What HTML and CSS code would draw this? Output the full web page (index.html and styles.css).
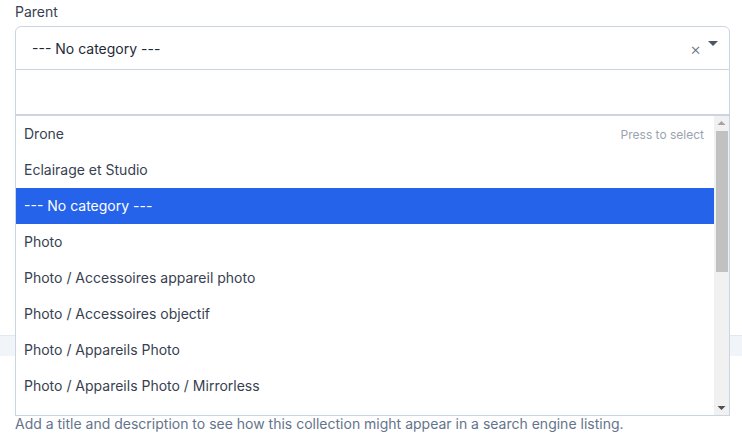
FILE: index.html
```html
<!DOCTYPE html>
<html>
<head>
<meta charset="utf-8">
<link rel="stylesheet" href="styles.css">
</head>
<body>
<div class="page">
  <div class="field">
    <label class="label">Parent</label>
    <div class="select">
      <span class="value">--- No category ---</span>
      <span class="clear">×</span>
      <span class="caret"></span>
    </div>
    <div class="dropdown">
      <div class="search"></div>
      <div class="list-wrap">
        <div class="options">
          <div class="opt"><span>Drone</span><span class="hint">Press to select</span></div>
          <div class="opt">Eclairage et Studio</div>
          <div class="opt active">--- No category ---</div>
          <div class="opt">Photo</div>
          <div class="opt">Photo / Accessoires appareil photo</div>
          <div class="opt">Photo / Accessoires objectif</div>
          <div class="opt">Photo / Appareils Photo</div>
          <div class="opt">Photo / Appareils Photo / Mirrorless</div>
        </div>
        <div class="scrollbar">
          <div class="sb-btn"><svg width="15" height="15" viewBox="0 0 15 15"><polygon points="3.5,9 11.5,9 7.5,5" fill="#a3a3a3"/></svg></div>
          <div class="sb-track"><div class="sb-thumb"></div></div>
          <div class="sb-btn"><svg width="15" height="15" viewBox="0 0 15 15"><polygon points="3.5,6 11.5,6 7.5,10" fill="#505050"/></svg></div>
        </div>
      </div>
    </div>
  </div>
  <div class="band"></div>
  <div class="seo">
    <p class="seo-desc">Add a title and description to see how this collection might appear in a search engine listing.</p>
  </div>
</div>
</body>
</html>
```
FILE: styles.css
```css
* { box-sizing: border-box; }
html, body { margin: 0; padding: 0; background: #fff; overflow: hidden; }
body { font-family: Inter, "Noto Sans", sans-serif; font-size: 14px; color: #374151; }
.page { padding: 2px 12px 0 15px; }
.field { position: relative; }
.label { display: block; line-height: 20px; margin-bottom: 4px; color: #374151; }
.select {
  height: 44px;
  border: 1px solid #cbd5e1;
  border-radius: 6px 6px 0 0;
  display: flex;
  align-items: center;
  padding: 0 0 0 16px;
  color: #1f2937;
}
.value { flex: 1; }
.clear { color: #6b7280; font-size: 17px; font-weight: 300; line-height: 1; margin-right: 7px; margin-top: 3px; }
.caret {
  width: 0; height: 0;
  border-left: 5px solid transparent;
  border-right: 5px solid transparent;
  border-top: 5px solid #4b5563;
  margin-right: 11px;
  margin-top: -9px;
}
.dropdown {
  position: absolute;
  top: 68px;
  left: 0;
  right: 0;
  background: #fff;
  border: 1px solid #cbd5e1;
  border-top: none;
  z-index: 10;
}
.search { height: 46px; border-bottom: 2px solid #cbd5e1; }
.list-wrap { display: flex; height: 299px; }
.options { flex: 1; overflow: hidden; }
.opt {
  height: 36px;
  display: flex;
  align-items: baseline;
  justify-content: space-between;
  padding: 8px 10px 0 8px;
  line-height: 20px;
  color: #374151;
  white-space: nowrap;
}
.opt.active { background: #2563eb; color: #fff; }
.hint { font-size: 12px; color: #9ca3af; }
.scrollbar { width: 15px; background: #f1f1f1; display: flex; flex-direction: column; }
.sb-btn { height: 15px; flex: none; }
.sb-btn svg { display: block; }
.sb-track { flex: 1; padding: 0 1px 0 2px; }
.sb-thumb { height: 141px; background: #c1c1c1; }
.band { height: 21px; background: #f1f5f9; border-top: 1px solid #e2e8f0; margin: 265px -12px 0 -15px; }
.seo { padding-top: 58px; }
.seo-desc { margin: 0; color: #64748b; line-height: 20px; }
```
